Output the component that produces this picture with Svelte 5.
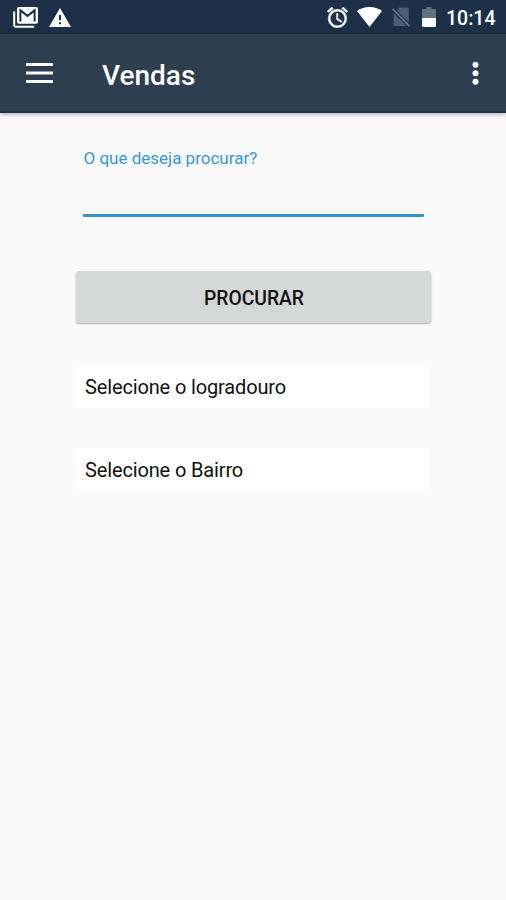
<script lang="ts">
	let query = $state('');

	const selects = [
		{ id: 'street', label: 'Selecione o logradouro' },
		{ id: 'district', label: 'Selecione o Bairro' }
	];
</script>

<div class="screen">
	<div class="status-bar">
		<div class="notifications">
			<svg width="25" height="21" viewBox="0 0 25 21">
				<path d="M1.2 4.5v13.8q0 1.4 1.4 1.4h18.6" fill="none" stroke="#fff" stroke-width="2" />
				<rect x="4" width="21" height="16.8" rx="2" fill="#fff" />
				<path
					d="M7.4 14.4V3.4l7.1 5.5 7.1-5.5v11"
					fill="none"
					stroke="#1c3147"
					stroke-width="2"
				/>
			</svg>
			<svg width="22" height="19" viewBox="0 0 22 19">
				<path
					fill="#fff"
					fill-rule="evenodd"
					d="M11 0l11 19H0zM10 7v5.2h2V7zM10 14.2v2h2v-2z"
				/>
			</svg>
		</div>
		<div class="system">
			<svg class="alarm" width="21" height="21" viewBox="1.8 1.8 20.4 20.4">
				<path
					fill="#fff"
					stroke="#fff"
					stroke-width="0.4"
					d="M22 5.72l-4.6-3.86-1.29 1.53 4.6 3.86L22 5.72zM7.88 3.39L6.6 1.86 2 5.71l1.29 1.53 4.59-3.85zM12.5 8H11v6l4.75 2.85.75-1.23-4-2.37V8zM12 4c-4.97 0-9 4.03-9 9s4.02 9 9 9a9 9 0 0 0 0-18zm0 16c-3.87 0-7-3.13-7-7s3.13-7 7-7 7 3.13 7 7-3.13 7-7 7z"
				/>
			</svg>
			<svg class="wifi" width="25" height="20" viewBox="0 0 25 20">
				<path fill="#fff" d="M12.5 20L0 4.1Q5.4 0 12.5 0T25 4.1z" />
			</svg>
			<svg class="sim" width="18" height="20" viewBox="0 0 18 20">
				<path
					fill="#4c5f71"
					d="M7.5 .5h7.8q1.5 0 1.5 1.5v13.6L4.7 3.3zM1.6 5.8L14.6 19H3.2q-1.6 0-1.6-1.6z"
				/>
				<path d="M.6 1.7l16.8 17.4" stroke="#6f7d8a" stroke-width="1.6" />
			</svg>
			<svg class="battery" width="14" height="20" viewBox="0 0 14 20">
				<path fill="#62717f" d="M4.5 0h5v2H13q1 0 1 1v8H0V3q0-1 1-1h3.5z" />
				<path fill="#fff" d="M0 11h14v8q0 1-1 1H1q-1 0-1-1z" />
			</svg>
			<span class="clock">10:14</span>
		</div>
	</div>

	<header class="toolbar">
		<button class="icon-button menu" aria-label="Menu">
			<svg width="27" height="20" viewBox="0 0 27 20">
				<path d="M0 1.5h27M0 10h27M0 18.5h27" stroke="#fff" stroke-width="2.8" />
			</svg>
		</button>
		<h1>Vendas</h1>
		<button class="icon-button more" aria-label="Mais">
			<svg width="7" height="24" viewBox="0 0 7 24">
				<circle cx="3.5" cy="3.7" r="3" fill="#fff" />
				<circle cx="3.5" cy="12.2" r="3" fill="#fff" />
				<circle cx="3.5" cy="20.8" r="3" fill="#fff" />
			</svg>
		</button>
	</header>

	<main>
		<div class="field">
			<label for="query">O que deseja procurar?</label>
			<input id="query" type="text" bind:value={query} />
		</div>

		<button class="search">PROCURAR</button>

		{#each selects as item (item.id)}
			<button class="select">{item.label}</button>
		{/each}
	</main>
</div>

<style>
	:global(body) {
		margin: 0;
		background: #fafafa;
	}

	.screen {
		display: flex;
		flex-direction: column;
		height: 900px;
		overflow: hidden;
		background: #fafafa;
		font-family: Roboto, sans-serif;
	}

	svg {
		display: block;
	}

	button {
		border: 0;
		padding: 0;
		font-family: inherit;
	}

	.status-bar {
		display: flex;
		justify-content: space-between;
		height: 34px;
		padding: 0 11px 0 13px;
		box-sizing: border-box;
		background: #1c3147;
		color: #fff;
	}

	.notifications,
	.system {
		display: flex;
		align-items: center;
	}

	.notifications {
		gap: 11px;
	}

	.wifi {
		margin-left: 9px;
	}

	.sim {
		margin-left: 10px;
	}

	.battery {
		margin-left: 12px;
	}

	.clock {
		width: 49px;
		margin-left: 10px;
		padding-top: 3px;
		font-size: 19.5px;
		font-weight: 500;
		line-height: 24px;
		white-space: nowrap;
	}

	.toolbar {
		display: flex;
		align-items: center;
		height: 79px;
		padding: 0 27px 0 26px;
		box-sizing: border-box;
		background: #2c3e50;
		border-bottom: 2px solid #1d3048;
		box-shadow: 0 1px 5px rgba(0, 0, 0, 0.35);
	}

	.icon-button {
		background: none;
	}

	h1 {
		flex: 1;
		margin: 6px 0 0 49px;
		color: #fff;
		font-size: 28px;
		font-weight: 500;
		line-height: 32px;
	}

	main {
		display: flex;
		flex-direction: column;
		padding: 34px 75px 0 76px;
	}

	.field {
		display: flex;
		flex-direction: column;
		margin: 0 7px;
	}

	label {
		padding-left: 0.5px;
		color: #3498db;
		font-size: 17px;
		line-height: 22px;
	}

	input {
		height: 48px;
		padding: 0;
		box-sizing: border-box;
		border: 0;
		border-bottom: 3px solid #3493cf;
		border-radius: 1px;
		background: none;
		font: inherit;
		outline: none;
	}

	.search {
		height: 52px;
		margin: 54px 0 42px;
		padding: 2px 0 0 1px;
		border-radius: 3px;
		background: #d6d8d7;
		box-shadow: 0 1px 2px rgba(0, 0, 0, 0.3);
		color: #111;
		font-size: 19.3px;
		font-weight: 500;
	}

	.select {
		height: 43px;
		margin: 0 2px 40px 1px;
		padding: 1px 8px 0;
		background: #fff;
		color: #111;
		font-size: 20px;
		letter-spacing: -0.14px;
		text-align: left;
	}
</style>
